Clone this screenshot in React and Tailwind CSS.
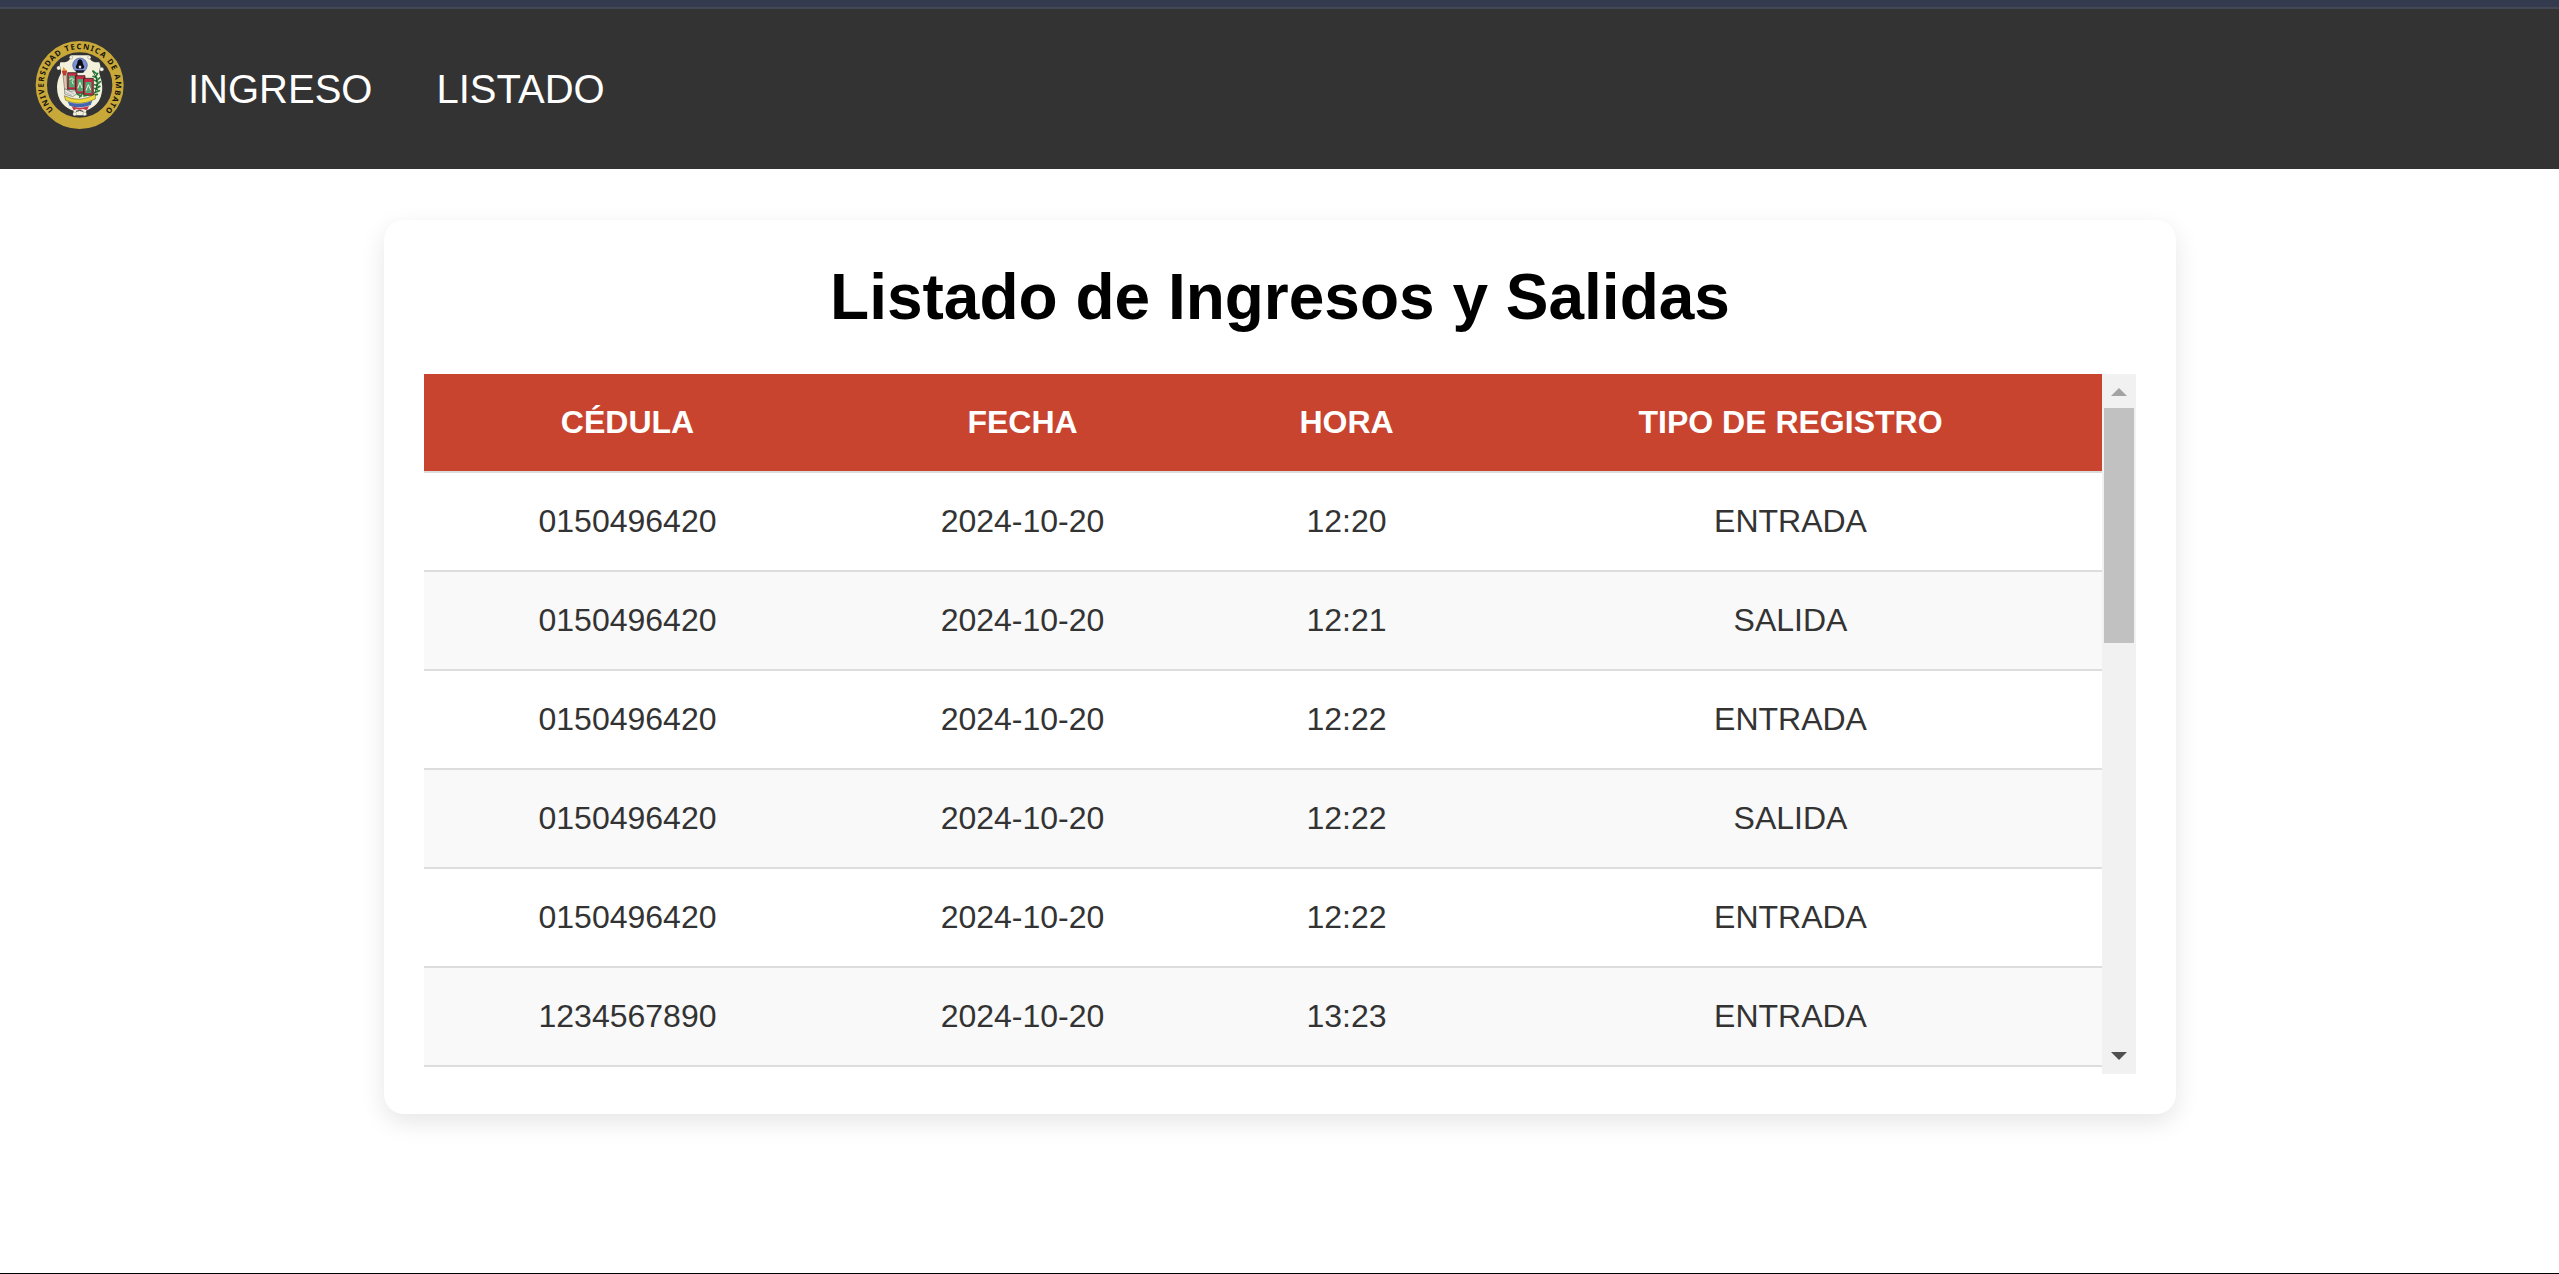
const rows = [
  ['0150496420', '2024-10-20', '12:20', 'ENTRADA'],
  ['0150496420', '2024-10-20', '12:21', 'SALIDA'],
  ['0150496420', '2024-10-20', '12:22', 'ENTRADA'],
  ['0150496420', '2024-10-20', '12:22', 'SALIDA'],
  ['0150496420', '2024-10-20', '12:22', 'ENTRADA'],
  ['1234567890', '2024-10-20', '13:23', 'ENTRADA'],
];

function Logo() {
  return (
    <svg viewBox="0 0 360 330" className="h-[110px] w-[120px] shrink-0">
      <defs>
        <path id="ring" d="M102 241 A108 108 0 1 1 256 241" />
      </defs>
      <circle cx="179" cy="165" r="115" fill="none" stroke="#c9a83a" strokeWidth="34" />
      <text
        fill="#16140c"
        fontSize="23"
        fontWeight="700"
        fontFamily="'Noto Sans', sans-serif"
      >
        <textPath href="#ring" textLength="506" startOffset="2">UNIVERSIDAD TECNICA DE AMBATO</textPath>
      </text>
      {/* shield */}
      <path
        d="M152 76 H208 L210 86 Q214 98 238 97 L242 112 Q234 124 241 140 Q250 168 245 190 Q241 214 222 229 Q208 239 198 242 L199 256 H160 L161 242 Q140 236 126 219 Q111 200 111 170 Q112 148 122 132 Q126 122 118 112 L121 97 Q146 98 150 86 Z"
        fill="#f3f1dc"
      />
      <g fill="#f7f6ea" stroke="#55554c" strokeWidth="1">
        <circle cx="153" cy="82" r="5" />
        <circle cx="208" cy="82" r="5" />
        <circle cx="116" cy="114" r="6" />
        <circle cx="245" cy="118" r="6" />
        <circle cx="164" cy="252" r="5.5" />
        <circle cx="194" cy="252" r="5.5" />
      </g>
      {/* medallion with the seated figure */}
      <circle cx="180" cy="106" r="22" fill="#7c90d2" stroke="#35437e" strokeWidth="1.5" />
      <path d="M180 88 q8 2 8 11 l5 12 q-2 7 -7 5 h-12 q-5 2 -7 -5 l5 -12 q0 -9 8 -11z" fill="#0c0e16" />
      <path d="M176 109 q4 -5 8 0 l-1 6 h-6z" fill="#e7e9f5" />
      <path d="M166 121 h28 l-4 7 h-20z" fill="#1e2030" />
      {/* torch */}
      <path d="M130 110 l6 8 l6 5 l-7 4 l-8 -5z" fill="#e3a23a" />
      <path d="M125 122 h16 l-2 14 h-10z" fill="#c23a33" />
      <path d="M129 136 h10 l4 44 h-9z" fill="#e2c3ae" stroke="#5a5144" strokeWidth="1.5" />
      {/* panels */}
      <g stroke="#101510" strokeWidth="2">
        <path d="M143 128 H171 V178 H143z" fill="#c32c46" />
        <path d="M167 137 H195 V190 H167z" fill="#c32c46" />
        <path d="M191 145 H220 V196 H191z" fill="#c32c46" />
      </g>
      <g fill="#4fa86f">
        <path d="M147 137 H164 V172 H147z" />
        <path d="M172 147 H189 V184 H172z" />
        <path d="M196 156 H214 V189 H196z" />
      </g>
      <g fill="none" stroke="#f0f0e4" strokeWidth="3">
        <path d="M149 150 l5 -6 l7 5 l-5 5 l4 9" />
        <path d="M173 175 l7 -18 l6 17" />
        <path d="M198 182 l7 -18 l7 16" />
      </g>
      <path d="M134 176 l18 8 l14 -2 l4 10 l-12 8 l-24 -8z" fill="#e9e9e4" stroke="#44443c" strokeWidth="1.5" />
      <path d="M140 180 l22 12 M136 186 l20 10" stroke="#8d8d86" strokeWidth="1.5" />
      {/* laurel */}
      <path
        d="M219 123 l10 8 M233 130 l-6 10 M219 139 l12 5 M240 143 l-9 8 M223 151 l10 4 M241 155 l-9 8 M224 164 l9 3 M240 169 l-10 6 M224 175 l8 4 M238 182 l-12 5 M232 193 l-12 3 M172 193 l12 5 M187 191 l-8 10 M192 198 l12 -3"
        stroke="#267c38"
        strokeWidth="5"
        strokeLinecap="round"
      />
      <path d="M218 124 Q247 160 214 205" fill="none" stroke="#173f20" strokeWidth="2.5" />
      {/* tricolour ribbon */}
      <path d="M133 197 Q178 221 226 192 L226 207 Q180 231 137 211z" fill="#f0d83c" stroke="#4b4520" strokeWidth="1.5" />
      <path d="M143 215 Q180 229 217 212 L212 225 Q180 238 149 227z" fill="#4267ae" />
      <path d="M155 229 Q180 238 207 228 L201 241 L188 237 Q178 241 170 237 L161 241z" fill="#c4374c" />
      <path d="M168 244 q11 -5 22 0" fill="none" stroke="#2a2a26" strokeWidth="3" />
    </svg>
  );
}

function Scrollbar() {
  return (
    <div className="flex h-[700px] w-[34px] shrink-0 flex-col items-center bg-[#f1f1f1]">
      <div className="flex h-[34px] shrink-0 items-end pb-3">
        <svg viewBox="0 0 16 8" className="h-2 w-4"><path d="M0 8 L8 0 L16 8z" fill="#a3a3a3" /></svg>
      </div>
      <div className="h-[235px] w-[30px] shrink-0 bg-[#c1c1c1]" />
      <div className="flex grow items-end pb-3.5">
        <svg viewBox="0 0 16 8" className="h-2 w-4"><path d="M0 0 L8 8 L16 0z" fill="#505050" /></svg>
      </div>
    </div>
  );
}

export default function App() {
  return (
    <div className="flex h-[1274px] w-full flex-col overflow-hidden border-b border-black bg-white font-['Liberation_Sans',Arial,sans-serif]">
      <div className="h-[9px] shrink-0 border-b-2 border-[#434854] bg-[#353b4f]" />
      <nav className="flex h-40 shrink-0 items-center bg-[#333333] pl-5">
        <div className="-mt-[9px] flex"><Logo /></div>
        <div className="ml-12 flex gap-16 text-[40px] leading-[46px] text-white">
          <a>INGRESO</a>
          <a>LISTADO</a>
        </div>
      </nav>
      <main className="mt-[51px] ml-[384px] h-[894px] w-[1792px] shrink-0 rounded-[20px] bg-white px-10 pt-10 shadow-[0_8px_24px_rgba(0,0,0,0.1)]">
        <h1 className="h-[74px] text-center text-[64px] leading-[74px] font-bold text-black">Listado de Ingresos y Salidas</h1>
        <div className="mt-10 flex h-[700px]">
          <div className="w-[1678px]">
            <table className="w-full table-fixed border-separate border-spacing-0 text-center text-[32px] leading-9">
              <colgroup>
                <col className="w-[407px]" />
                <col className="w-[383px]" />
                <col className="w-[265px]" />
                <col className="w-[623px]" />
              </colgroup>
              <thead>
                <tr className="h-[99px] bg-[#c8442f] text-white">
                  {['CÉDULA', 'FECHA', 'HORA', 'TIPO DE REGISTRO'].map((h) => (
                    <th key={h} className="border-b-2 border-[#dddddd] p-0 pb-px text-center font-bold">{h}</th>
                  ))}
                </tr>
              </thead>
              <tbody>
                {rows.map((r, i) => (
                  <tr key={i} className="h-[99px] text-[#333333] even:bg-[#f9f9f9]">
                    {r.map((c, j) => (
                      <td key={j} className="border-b-2 border-[#dddddd] p-0 pb-px">{c}</td>
                    ))}
                  </tr>
                ))}
              </tbody>
            </table>
          </div>
          <Scrollbar />
        </div>
      </main>
    </div>
  );
}
